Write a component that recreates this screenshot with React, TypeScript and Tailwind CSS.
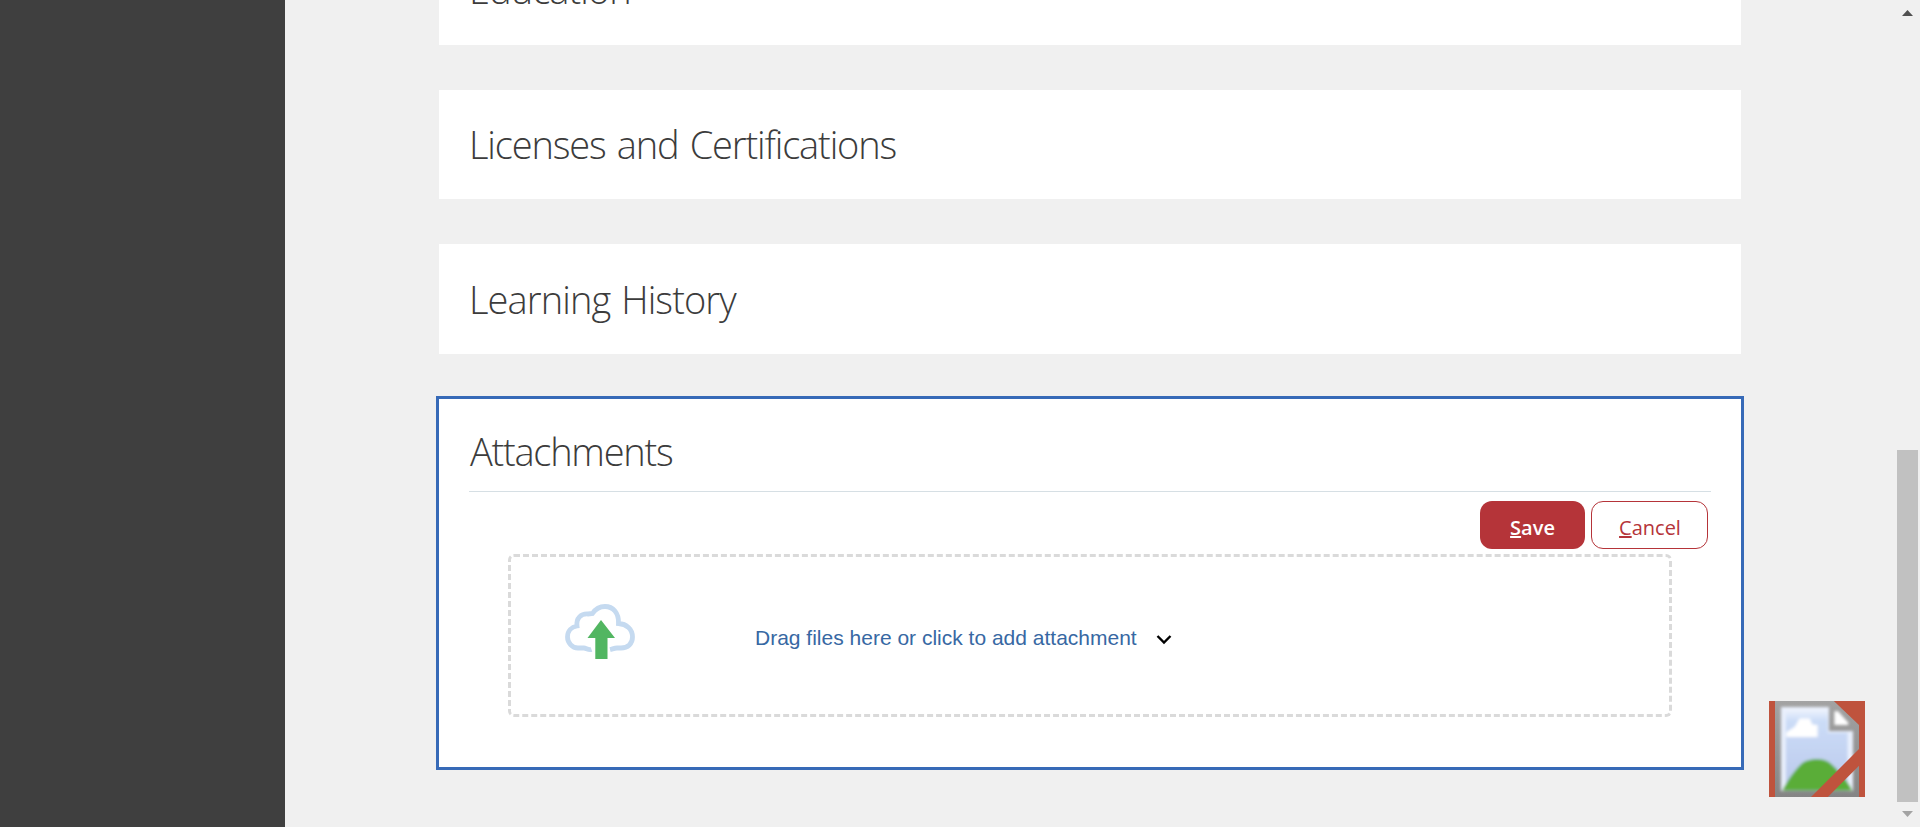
import React from "react";

const headingClass =
  "font-['Open_Sans'] text-[38px] leading-[52px] font-light text-[#3c3c3c] whitespace-nowrap";

function UploadIcon() {
  return (
    <svg className="mb-[9px] h-[60px] w-[72px] shrink-0" viewBox="0 0 72 60" fill="none">
      <path
        d="M27.500 48.500C24.500 49.500 22 47 20 47H14C8 47 3.500 41.500 3.500 36C3.500 30 7.500 26 13 25C12 17 17 12.500 24 13L28.500 12.500C31.500 8 36 5.500 41 5.500C49 5.500 55 12 54.500 22.500C62.500 23 68.500 28 68.500 36C68.500 42.500 64 47 57 47H53C50.500 47 48.500 48 46 48.500"
        stroke="#c5daf0"
        strokeWidth="4.800"
      />
      <path d="M37 19L51 37H43.500V58H31.300V37H23.500Z" fill="#52b661" />
    </svg>
  );
}

function MissingImage() {
  return (
    <svg className="size-24" viewBox="0 0 16 16">
      <defs>
        <linearGradient id="sky" x1="0" y1="0" x2="0" y2="1">
          <stop offset="0" stopColor="#f0f4fd" />
          <stop offset="0.15" stopColor="#cbdcf7" />
          <stop offset="1" stopColor="#bac8ec" />
        </linearGradient>
        <linearGradient id="frame" x1="0" y1="0" x2="0" y2="1">
          <stop offset="0" stopColor="#a3a3a3" />
          <stop offset="1" stopColor="#858585" />
        </linearGradient>
        <filter id="soft" x="-10%" y="-10%" width="120%" height="120%">
          <feGaussianBlur stdDeviation="0.28" />
        </filter>
      </defs>
      <rect width="16" height="16" fill="#bf533d" />
      <path d="M1 0H10.800L15 4V16H1Z" fill="url(#frame)" />
      <g filter="url(#soft)">
        <path d="M2 1H10V5H14V15H2Z" fill="#e9f0fd" />
        <path d="M2.800 1.300H9.800V5.300H13.100V15H2.800Z" fill="url(#sky)" />
        <path d="M2.900 6V5.200L4.300 4.300L5.100 2.900H6.800L7.200 3.900L8.100 4V6Z" fill="#fff" />
        <path
          d="M2.200 14.900C3 13.500 4.200 11.500 5.600 10.300C7 9.500 8.800 9.500 10 10.200C11.500 11.400 13 13.200 13.900 14.900Z"
          fill="#5aad38"
        />
        <path d="M10.900 1.700V4H13.200V3.600L11.500 1.700Z" fill="#fff" />
      </g>
      <path d="M15 8V10.800L9.800 16H7Z" fill="#bf533d" />
    </svg>
  );
}

export default function App() {
  return (
    <div className="relative flex h-[827px] w-full overflow-hidden bg-[#f0f0f0]">
      <aside className="w-[285px] shrink-0 bg-[#3f3f3f]" />
      <main className="flex flex-1 flex-col pl-[151px]">
        <section className="ml-[3px] flex h-[45px] w-[1302px] shrink-0 items-end bg-white pb-[30px] pl-[30px]">
          <h2 className={`${headingClass} tracking-[-0.95px]`}>Education</h2>
        </section>
        <section className="mt-[45px] ml-[3px] flex h-[109px] w-[1302px] shrink-0 items-center bg-white pb-[2px] pl-[30px]">
          <h2 className={`${headingClass} tracking-[-1.15px] [word-spacing:2.5px]`}>
            Licenses and Certifications
          </h2>
        </section>
        <section className="mt-[45px] ml-[3px] flex h-[110px] w-[1302px] shrink-0 items-center bg-white pl-[30px]">
          <h2 className={`${headingClass} tracking-[-0.9px] [word-spacing:2px]`}>Learning History</h2>
        </section>
        <section className="mt-[42px] h-[374px] w-[1308px] shrink-0 border-[3px] border-[#376ab7] bg-white pr-[30px] pl-[30px]">
          <div className="flex h-[93px] items-start border-b border-[#d6dfe4] pt-[26px] pl-px">
            <h2 className={`${headingClass} tracking-[-1.25px]`}>Attachments</h2>
          </div>
          <div className="flex justify-end gap-1.5 pt-[9px] pr-[3px] font-['Open_Sans'] text-[20px] font-semibold">
            <button className="h-12 w-[105px] rounded-xl bg-[#b53439] pt-1.5 text-white">
              <span className="underline">S</span>ave
            </button>
            <button className="h-12 w-[117px] rounded-xl border border-[#b53439] pt-1.5 pl-px font-medium text-[#b53439]">
              <span className="underline">C</span>ancel
            </button>
          </div>
          <div className="mt-[5px] ml-[39px] flex h-[163px] w-[1164px] items-center rounded-md border-[3px] border-dashed border-[#dadada] pl-[53px]">
            <UploadIcon />
            <span className="mt-1 ml-[119px] font-['Liberation_Sans'] text-[21px] text-[#3768a3]">
              Drag files here or click to add attachment
            </span>
            <svg className="mt-2 ml-[19px] h-4 w-4" viewBox="0 0 16 16" fill="none">
              <path d="M1.500 4L8 10.500L14.500 4" stroke="#000" strokeWidth="2.400" />
            </svg>
          </div>
        </section>
      </main>
      <div className="absolute top-[701px] left-[1769px]">
        <MissingImage />
      </div>
      <div className="absolute inset-y-0 right-px flex w-[23px] flex-col items-center justify-between pt-[10px] pb-[10px]">
        <svg className="h-1.5 w-[11px]" viewBox="0 0 11 6">
          <path d="M5.500 0L11 6H0Z" fill="#505050" />
        </svg>
        <div className="absolute top-[450px] left-0 ml-px h-[352px] w-[21px] bg-[#c1c1c1]" />
        <svg className="h-1.5 w-[11px]" viewBox="0 0 11 6">
          <path d="M0 0H11L5.500 6Z" fill="#a3a3a3" />
        </svg>
      </div>
    </div>
  );
}
